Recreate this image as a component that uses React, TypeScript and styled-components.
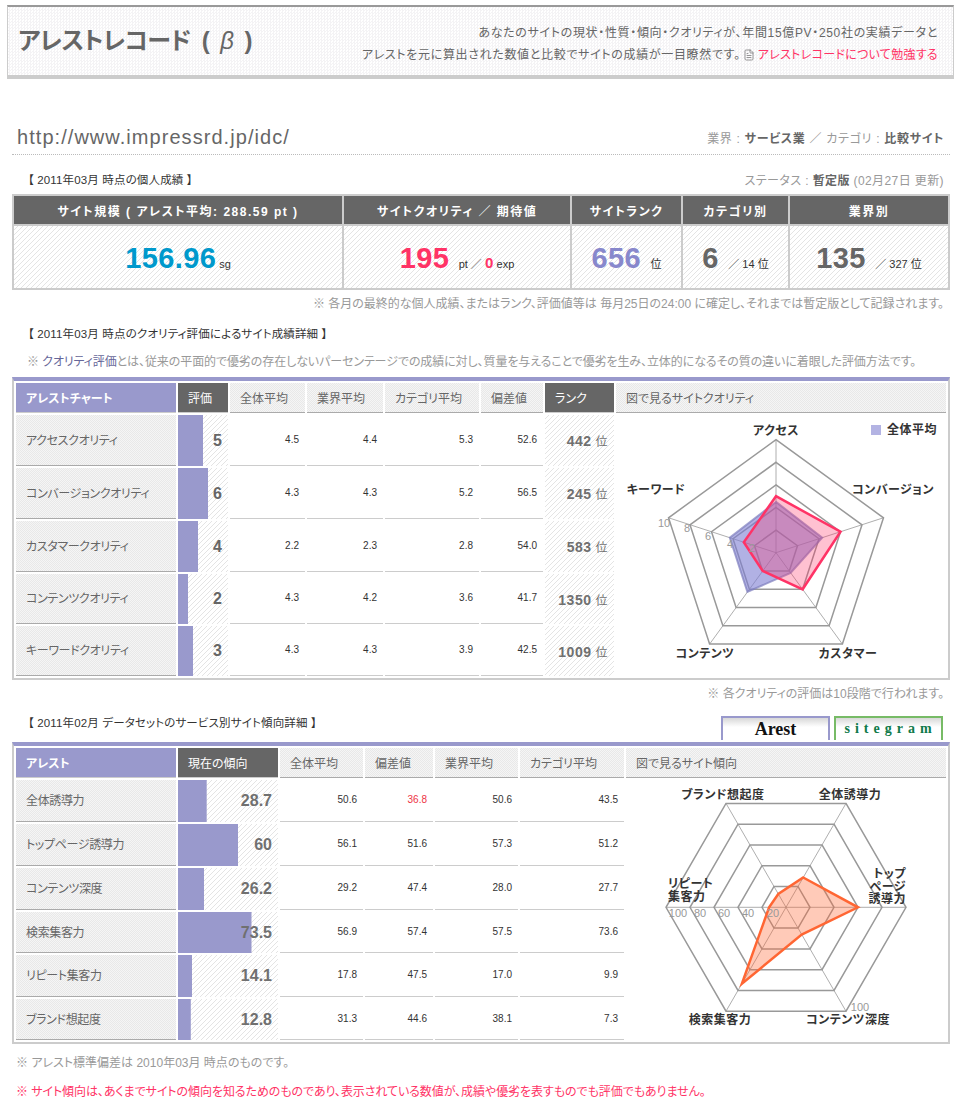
import React from 'react';
import styled, { createGlobalStyle } from 'styled-components';
import { FileText } from 'lucide-react';

const HATCH = 'linear-gradient(135deg, #fff 0 36%, #e4e4e4 36% 50%, #fff 50% 86%, #e4e4e4 86%) 0 0 / 5px 5px';
const DOTS = 'conic-gradient(#e8e8e8 25%, #f5f5f5 0 50%, #e8e8e8 0 75%, #f5f5f5 0)';

const GlobalStyle = createGlobalStyle`
  html, body {
    margin: 0;
    padding: 0;
    background: #fff;
  }
  body {
    font-family: "Liberation Sans", "Noto Sans CJK JP", sans-serif;
    font-size: 12px;
    font-feature-settings: "palt";
    color: #666;
  }
`;

const Page = styled.div`
  width: 961px;
  height: 1117px;
  padding-top: 5px;
  box-sizing: border-box;
  overflow: hidden;
`;

// --- header ---
const Header = styled.header`
  box-sizing: border-box;
  width: 947px;
  height: 74px;
  margin-left: 7px;
  padding: 0 15px 0 10px;
  display: flex;
  justify-content: space-between;
  align-items: center;
  border-top: 2px solid #999;
  border-bottom: 4px solid #ccc;
  border-left: 1px solid #ccc;
  border-right: 1px solid #ccc;
  background: conic-gradient(#f4f3f5 25%, #fff 0 50%, #f4f3f5 0 75%, #fff 0) 0 0 / 3px 3px;
`;

const Logo = styled.h1`
  margin: 0 0 6px;
  font-size: 24px;
  font-weight: 700;
  color: #666;
  letter-spacing: -0.6px;
  word-spacing: 5px;
`;

const Beta = styled.i`
  font-weight: 400;
`;

const Intro = styled.p`
  margin: 5px 0 0;
  text-align: right;
  line-height: 22px;
  letter-spacing: 0.67px;
  color: #666;
`;

const PinkLink = styled.a`
  color: #ff3366;
  letter-spacing: 0.3px;
`;

const DocIcon = styled(FileText)`
  vertical-align: -2px;
  margin: 0 3px 0 2px;
  color: #777;
`;

// --- url row ---
const UrlRow = styled.div`
  box-sizing: border-box;
  width: 938px;
  height: 35px;
  margin: 41px 0 0 12px;
  padding: 0 6px 0 5px;
  display: flex;
  justify-content: space-between;
  align-items: center;
  border-bottom: 1px dotted #bbb;
`;

const Url = styled.div`
  font-size: 20px;
  letter-spacing: 1.05px;
  color: #666;
`;

const Facts = styled.div<{ $spacing: number }>`
  letter-spacing: ${(p) => p.$spacing}px;
`;

const Muted = styled.span`
  color: #999;
`;

const Strong = styled.b`
  color: #666;
`;

// --- section titles and notes ---
const TitleRow = styled.div<{ $h: number; $top?: number }>`
  box-sizing: border-box;
  width: 938px;
  height: ${(p) => p.$h}px;
  margin-left: 12px;
  padding: ${(p) => p.$top || 0}px 6px 0 16px;
  display: flex;
  justify-content: space-between;
  align-items: center;
`;

const Title = styled.div`
  font-size: 11.5px;
  letter-spacing: 0.15px;
  color: #333;
`;

const TabbedTitle = styled(Title)`
  align-self: flex-start;
  margin-top: 5px;
`;

const Note = styled.p<{ $h: number; $right?: boolean; $pink?: boolean; $spacing?: number }>`
  box-sizing: border-box;
  width: 938px;
  height: ${(p) => p.$h}px;
  margin: 0 0 0 12px;
  padding: 0 6px 0 ${(p) => (p.$right ? 0 : 4)}px;
  line-height: ${(p) => p.$h}px;
  text-align: ${(p) => (p.$right ? 'right' : 'left')};
  letter-spacing: ${(p) => p.$spacing || 0}px;
  color: ${(p) => (p.$pink ? '#ff3366' : '#999')};
  white-space: nowrap;
`;

const DescMark = styled.span`
  margin-left: 11px;
`;

const TermLink = styled.a`
  color: #666699;
`;

// --- status table ---
const StatusTable = styled.table`
  width: 938px;
  margin-left: 12px;
  border-collapse: separate;
  border-spacing: 2px;
  table-layout: fixed;
  background: #ccc;
`;

const StatusHead = styled.th<{ $w: number }>`
  width: ${(p) => p.$w}px;
  height: 28px;
  padding: 0;
  background: #666;
  color: #fff;
  font-size: 12px;
  font-weight: 700;
  letter-spacing: 1.5px;
`;

const StatusCell = styled.td`
  height: 62px;
  padding: 3px 0 0;
  box-sizing: border-box;
  background: ${HATCH};
  text-align: center;
  white-space: nowrap;
`;

const BigNumber = styled.b<{ $color: string }>`
  font-size: 29px;
  letter-spacing: 0.4px;
  color: ${(p) => p.$color};
  margin-right: 3px;
`;

const Unit = styled.span`
  font-size: 11px;
  color: #333;
`;

const MidNumber = styled.b`
  font-size: 15px;
  color: #ff3366;
`;

// --- data tables ---
const DataTable = styled.table`
  width: 938px;
  margin-left: 12px;
  border-collapse: separate;
  border-spacing: 2px;
  table-layout: fixed;
  border-top: 4px solid #9999cc;
  border-left: 2px solid #ccc;
  border-right: 2px solid #ccc;
  border-bottom: 2px solid #ccc;
`;

const Head = styled.th<{ $w: number; $kind?: 'purple' | 'dark' }>`
  box-sizing: border-box;
  width: ${(p) => p.$w}px;
  height: 30px;
  padding: 0 0 0 10px;
  text-align: left;
  font-size: 12px;
  font-weight: ${(p) => (p.$kind === 'purple' ? 700 : 400)};
  color: ${(p) => (p.$kind ? '#fff' : '#666')};
  background: ${(p) =>
    p.$kind === 'purple' ? '#9999cc' : p.$kind === 'dark' ? '#666' : `${DOTS} 0 0 / 2px 2px`};
  border-bottom: 1px solid ${(p) => (p.$kind ? '#ccc' : '#aaa')};
`;

const LabelCell = styled.td<{ $h: number }>`
  box-sizing: border-box;
  height: ${(p) => p.$h}px;
  padding: 0 0 2px 10px;
  font-size: 12px;
  letter-spacing: -0.35px;
  color: #666;
  background: ${DOTS} 0 0 / 2px 2px;
  border-bottom: 1px solid #aaa;
`;

const ScoreCell = styled.td<{ $bar: number; $tone: string }>`
  padding: 0 6px 0 0;
  text-align: right;
  font-size: 16px;
  font-weight: 700;
  color: ${(p) => p.$tone};
  background:
    linear-gradient(#9999cc, #9999cc) left top / ${(p) => p.$bar}px 100% no-repeat,
    ${HATCH};
`;

const ValueCell = styled.td<{ $red?: boolean }>`
  padding: 0 6px 2px 0;
  text-align: right;
  font-size: 10px;
  color: ${(p) => (p.$red ? '#ee3344' : '#333')};
  border-bottom: 1px solid #ccc;
`;

const RankCell = styled.td`
  padding: 0 6px 0 0;
  text-align: right;
  font-size: 14px;
  font-weight: 700;
  letter-spacing: 0.5px;
  color: #707070;
  background: ${HATCH};
`;

const RankUnit = styled.span`
  font-size: 12px;
  font-weight: 400;
  margin-left: 4px;
`;

const ChartCell = styled.td`
  padding: 0;
  vertical-align: top;
`;

const Tabs = styled.div`
  display: flex;
  gap: 4px;
  margin: 0 1px 2px 0;
  align-self: flex-end;
`;

const Tab = styled.div<{ $color: string }>`
  box-sizing: border-box;
  width: 109px;
  height: 24px;
  display: flex;
  align-items: center;
  justify-content: center;
  border: 2px solid ${(p) => p.$color};
  border-bottom: none;
  background: linear-gradient(#d8d8d8, #fff 9px);
`;

const ArestMark = styled.span`
  font-family: "Liberation Serif", serif;
  font-size: 18px;
  font-weight: 700;
  color: #111;
`;

const SitegramMark = styled.span`
  font-family: "Liberation Serif", serif;
  font-size: 14px;
  font-weight: 700;
  letter-spacing: 5px;
  color: #0f7a4a;
  margin-left: 4px;
`;

// --- radar chart ---
const ChartSvg = styled.svg`
  display: block;
`;

const AxisLabel = styled.text`
  font-size: 12px;
  font-weight: 700;
  letter-spacing: 0.5px;
  fill: #333;
`;

const ScaleLabel = styled.text`
  font-size: 11px;
  fill: #999;
`;

type Series = { values: number[]; fill: string; stroke: string; width: number };
type Label = { text: string; x: number; y: number; anchor?: 'start' | 'middle' | 'end' };

type RadarProps = {
  box: [number, number, number, number];
  cx: number;
  cy: number;
  radius: number;
  max: number;
  rings: number;
  startDeg: number;
  axes: number;
  series: Series[];
  labels: Label[];
  scale: Label[];
  children?: React.ReactNode;
};

const Radar = ({ box, cx, cy, radius, max, rings, startDeg, axes, series, labels, scale, children }: RadarProps) => {
  const point = (i: number, r: number) => {
    const a = ((startDeg + (360 / axes) * i) * Math.PI) / 180;
    return [cx + r * Math.cos(a), cy + r * Math.sin(a)];
  };
  const poly = (rs: number[]) => rs.map((r, i) => point(i, r).map((n) => n.toFixed(1)).join(',')).join(' ');

  return (
    <ChartSvg width={box[2]} height={box[3]} viewBox={box.join(' ')}>
      {Array.from({ length: axes }).map((_, i) => {
        const [x, y] = point(i, radius);
        return <line key={i} x1={cx} y1={cy} x2={x} y2={y} stroke="#999" strokeWidth={0.8} />;
      })}
      {Array.from({ length: rings }).map((_, i) => (
        <polygon
          key={i}
          points={poly(Array(axes).fill((radius * (i + 1)) / rings))}
          fill="none"
          stroke="#999"
          strokeWidth={1.5}
        />
      ))}
      {series.map((s, i) => (
        <polygon
          key={i}
          points={poly(s.values.map((v) => (v / max) * radius))}
          fill={s.fill}
          stroke={s.stroke}
          strokeWidth={s.width}
        />
      ))}
      {scale.map((l) => (
        <ScaleLabel key={l.text + l.x} x={l.x} y={l.y + 4} textAnchor="middle">
          {l.text}
        </ScaleLabel>
      ))}
      {labels.map((l) => (
        <AxisLabel key={l.text} x={l.x} y={l.y + 4} textAnchor={l.anchor || 'middle'}>
          {l.text}
        </AxisLabel>
      ))}
      {children}
    </ChartSvg>
  );
};

// --- data ---
const qualityRows = [
  { name: 'アクセスクオリティ', score: 5, vals: ['4.5', '4.4', '5.3', '52.6'], rank: 442, h: 51 },
  { name: 'コンバージョンクオリティ', score: 6, vals: ['4.3', '4.3', '5.2', '56.5'], rank: 245, h: 51 },
  { name: 'カスタマークオリティ', score: 4, vals: ['2.2', '2.3', '2.8', '54.0'], rank: 583, h: 51 },
  { name: 'コンテンツクオリティ', score: 2, vals: ['4.3', '4.2', '3.6', '41.7'], rank: 1350, h: 50 },
  { name: 'キーワードクオリティ', score: 3, vals: ['4.3', '4.3', '3.9', '42.5'], rank: 1009, h: 50 },
];

const trendRows = [
  { name: '全体誘導力', score: 28.7, vals: ['50.6', '36.8', '50.6', '43.5'], h: 42 },
  { name: 'トップページ誘導力', score: 60, vals: ['56.1', '51.6', '57.3', '51.2'], h: 42 },
  { name: 'コンテンツ深度', score: 26.2, vals: ['29.2', '47.4', '28.0', '27.7'], h: 42 },
  { name: '検索集客力', score: 73.5, vals: ['56.9', '57.4', '57.5', '73.6'], h: 41 },
  { name: 'リピート集客力', score: 14.1, vals: ['17.8', '47.5', '17.0', '9.9'], h: 42 },
  { name: 'ブランド想起度', score: 12.8, vals: ['31.3', '44.6', '38.1', '7.3'], h: 41 },
];

const App: React.FC = () => (
  <Page>
    <GlobalStyle />
    <Header>
      <Logo>
        アレストレコード ( <Beta>β</Beta> )
      </Logo>
      <Intro>
        あなたのサイトの現状・性質・傾向・クオリティが、年間15億PV・250社の実績データと
        <br />
        アレストを元に算出された数値と比較でサイトの成績が一目瞭然です。
        <DocIcon size={12} strokeWidth={1.5} />
        <PinkLink>アレストレコードについて勉強する</PinkLink>
      </Intro>
    </Header>

    <UrlRow>
      <Url>http://www.impressrd.jp/idc/</Url>
      <Facts $spacing={0.7}>
        <Muted>業界 : </Muted>
        <Strong>サービス業</Strong>
        <Muted> ／ カテゴリ : </Muted>
        <Strong>比較サイト</Strong>
      </Facts>
    </UrlRow>

    <TitleRow $h={39} $top={9}>
      <Title>【 2011年03月 時点の個人成績 】</Title>
      <Facts $spacing={0.4}>
        <Muted>ステータス : </Muted>
        <Strong>暫定版</Strong>
        <Muted> (02月27日 更新)</Muted>
      </Facts>
    </TitleRow>

    <StatusTable>
      <thead>
        <tr>
          <StatusHead $w={328}>サイト規模 ( アレスト平均: 288.59 pt )</StatusHead>
          <StatusHead $w={226}>サイトクオリティ ／ 期待値</StatusHead>
          <StatusHead $w={109}>サイトランク</StatusHead>
          <StatusHead $w={105}>カテゴリ別</StatusHead>
          <StatusHead $w={158}>業界別</StatusHead>
        </tr>
      </thead>
      <tbody>
        <tr>
          <StatusCell>
            <BigNumber $color="#0099cc">156.96</BigNumber>
            <Unit>sg</Unit>
          </StatusCell>
          <StatusCell>
            <BigNumber $color="#ff3366">195</BigNumber> <Unit>&nbsp;pt ／ </Unit>
            <MidNumber>0</MidNumber> <Unit>exp</Unit>
          </StatusCell>
          <StatusCell>
            <BigNumber $color="#8888cc">656</BigNumber> <Unit>&nbsp;位</Unit>
          </StatusCell>
          <StatusCell>
            <BigNumber $color="#666">6</BigNumber> <Unit>&nbsp;／ 14 位</Unit>
          </StatusCell>
          <StatusCell>
            <BigNumber $color="#666">135</BigNumber> <Unit>&nbsp;／ 327 位</Unit>
          </StatusCell>
        </tr>
      </tbody>
    </StatusTable>

    <Note $h={28} $right>
      ※ 各月の最終的な個人成績、またはランク、評価値等は 毎月25日の24:00 に確定し、それまでは暫定版として記録されます。
    </Note>
    <TitleRow $h={30}>
      <Title>【 2011年03月 時点のクオリティ評価によるサイト成績詳細 】</Title>
    </TitleRow>
    <Note $h={29} $spacing={-0.09}>
      <DescMark>※ </DescMark>
      <TermLink>クオリティ評価</TermLink>
      とは、従来の平面的で優劣の存在しないパーセンテージでの成績に対し、質量を与えることで優劣を生み、立体的になるその質の違いに着眼した評価方法です。
    </Note>

    <DataTable>
      <thead>
        <tr>
          <Head $w={160} $kind="purple">アレストチャート</Head>
          <Head $w={50} $kind="dark">評価</Head>
          <Head $w={75}>全体平均</Head>
          <Head $w={76}>業界平均</Head>
          <Head $w={94}>カテゴリ平均</Head>
          <Head $w={62}>偏差値</Head>
          <Head $w={69} $kind="dark">ランク</Head>
          <Head $w={330}>図で見るサイトクオリティ</Head>
        </tr>
      </thead>
      <tbody>
        {qualityRows.map((row, i) => (
          <tr key={row.name}>
            <LabelCell $h={row.h}>{row.name}</LabelCell>
            <ScoreCell $bar={row.score * 5} $tone="#666">{row.score}</ScoreCell>
            {row.vals.map((v, j) => (
              <ValueCell key={j}>{v}</ValueCell>
            ))}
            <RankCell>
              {row.rank}
              <RankUnit>位</RankUnit>
            </RankCell>
            {i === 0 && (
              <ChartCell rowSpan={5}>
                <Radar
                  box={[616, 415, 330, 261]}
                  cx={776}
                  cy={552.7}
                  radius={113}
                  max={10}
                  rings={5}
                  startDeg={-90}
                  axes={5}
                  series={[
                    { values: [4.5, 4.3, 2.2, 4.3, 4.3], fill: 'rgba(125,125,210,.6)', stroke: 'rgba(125,125,190,.7)', width: 2 },
                    { values: [5, 6, 4, 2, 3], fill: 'rgba(255,51,102,.3)', stroke: '#ff3366', width: 2.5 },
                  ]}
                  labels={[
                    { text: 'アクセス', x: 776, y: 431 },
                    { text: 'コンバージョン', x: 893, y: 490 },
                    { text: 'カスタマー', x: 848, y: 654 },
                    { text: 'コンテンツ', x: 705, y: 654 },
                    { text: 'キーワード', x: 656, y: 490 },
                    { text: '全体平均', x: 887, y: 430, anchor: 'start' },
                  ]}
                  scale={[
                    { text: '10', x: 664, y: 523 },
                    { text: '8', x: 687, y: 528 },
                    { text: '6', x: 708, y: 536 },
                    { text: '4', x: 730, y: 544 },
                    { text: '2', x: 752, y: 548 },
                  ]}
                >
                  <rect x={871} y={425} width={10} height={10} fill="#b3b3e3" />
                </Radar>
              </ChartCell>
            )}
          </tr>
        ))}
      </tbody>
    </DataTable>

    <Note $h={29} $right>※ 各クオリティの評価は10段階で行われます。</Note>

    <TitleRow $h={33}>
      <TabbedTitle>【 2011年02月 データセットのサービス別サイト傾向詳細 】</TabbedTitle>
      <Tabs>
        <Tab $color="#9999cc"><ArestMark>Arest</ArestMark></Tab>
        <Tab $color="#77bb66"><SitegramMark>sitegram</SitegramMark></Tab>
      </Tabs>
    </TitleRow>

    <DataTable>
      <thead>
        <tr>
          <Head $w={160} $kind="purple">アレスト</Head>
          <Head $w={100} $kind="dark">現在の傾向</Head>
          <Head $w={83}>全体平均</Head>
          <Head $w={68}>偏差値</Head>
          <Head $w={83}>業界平均</Head>
          <Head $w={104}>カテゴリ平均</Head>
          <Head $w={320}>図で見るサイト傾向</Head>
        </tr>
      </thead>
      <tbody>
        {trendRows.map((row, i) => (
          <tr key={row.name}>
            <LabelCell $h={row.h}>{row.name}</LabelCell>
            <ScoreCell $bar={row.score} $tone="#707070">{row.score}</ScoreCell>
            {row.vals.map((v, j) => (
              <ValueCell key={j} $red={v === '36.8'}>{v}</ValueCell>
            ))}
            {i === 0 && (
              <ChartCell rowSpan={6}>
                <Radar
                  box={[626, 780, 320, 260]}
                  cx={786}
                  cy={907.3}
                  radius={120}
                  max={100}
                  rings={5}
                  startDeg={-60}
                  axes={6}
                  series={[
                    { values: [28.7, 60, 26.2, 73.5, 14.1, 12.8], fill: 'rgba(255,102,51,.35)', stroke: '#ff6633', width: 2.5 },
                  ]}
                  labels={[
                    { text: 'ブランド想起度', x: 723, y: 795 },
                    { text: '全体誘導力', x: 850, y: 795 },
                    { text: 'トップ', x: 906, y: 874, anchor: 'end' },
                    { text: 'ページ', x: 906, y: 887, anchor: 'end' },
                    { text: '誘導力', x: 906, y: 899, anchor: 'end' },
                    { text: 'リピート', x: 668, y: 884, anchor: 'start' },
                    { text: '集客力', x: 668, y: 897, anchor: 'start' },
                    { text: '検索集客力', x: 720, y: 1020 },
                    { text: 'コンテンツ深度', x: 848, y: 1020 },
                  ]}
                  scale={[
                    { text: '100', x: 678, y: 913 },
                    { text: '80', x: 700, y: 913 },
                    { text: '60', x: 724, y: 913 },
                    { text: '40', x: 748, y: 913 },
                    { text: '20', x: 773, y: 913 },
                    { text: '100', x: 860, y: 1007 },
                  ]}
                />
              </ChartCell>
            )}
          </tr>
        ))}
      </tbody>
    </DataTable>

    <Note $h={38}>※ アレスト標準偏差は 2010年03月 時点のものです。</Note>
    <Note $h={20} $pink $spacing={-0.07}>※ サイト傾向は、あくまでサイトの傾向を知るためのものであり、表示されている数値が、成績や優劣を表すものでも評価でもありません。</Note>
  </Page>
);

export default App;
